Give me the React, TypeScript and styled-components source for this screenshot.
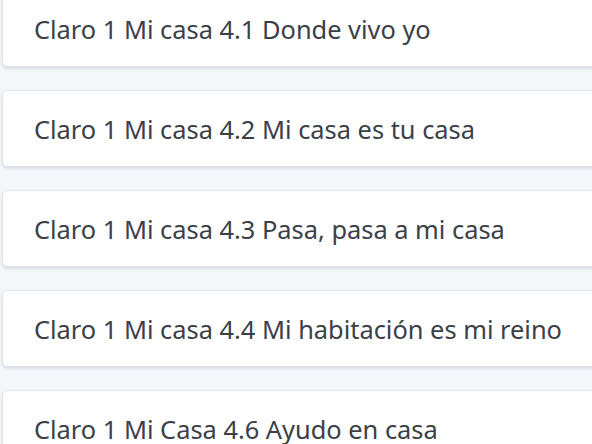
import styled, { createGlobalStyle } from "styled-components";

const items = [
  "Claro 1 Mi casa 4.1 Donde vivo yo",
  "Claro 1 Mi casa 4.2 Mi casa es tu casa",
  "Claro 1 Mi casa 4.3 Pasa, pasa a mi casa",
  "Claro 1 Mi casa 4.4 Mi habitación es mi reino",
  "Claro 1 Mi Casa 4.6 Ayudo en casa",
];

const GlobalStyle = createGlobalStyle`
  html, body {
    margin: 0;
    background: #f4f7fa;
    overflow: hidden;
  }
`;

export default function App() {
  return (
    <>
      <GlobalStyle />
      <List>
        {items.map((t) => (
          <Card key={t}>{t}</Card>
        ))}
      </List>
    </>
  );
}

const List = styled.div`
  display: flex;
  flex-direction: column;
  gap: 23px;
  margin-top: -10px;
  padding-left: 2px;
  width: 620px;
`;

const Card = styled.div`
  box-sizing: border-box;
  height: 77px;
  display: flex;
  align-items: center;
  padding-left: 31px;
  background: #ffffff;
  border: 1px solid #dfe2e6;
  border-radius: 5px;
  box-shadow: 0 2px 3px rgba(40, 50, 70, 0.12);
  font-family: "Noto Sans", sans-serif;
  font-size: 25.4px;
  color: #3b4048;
`;
